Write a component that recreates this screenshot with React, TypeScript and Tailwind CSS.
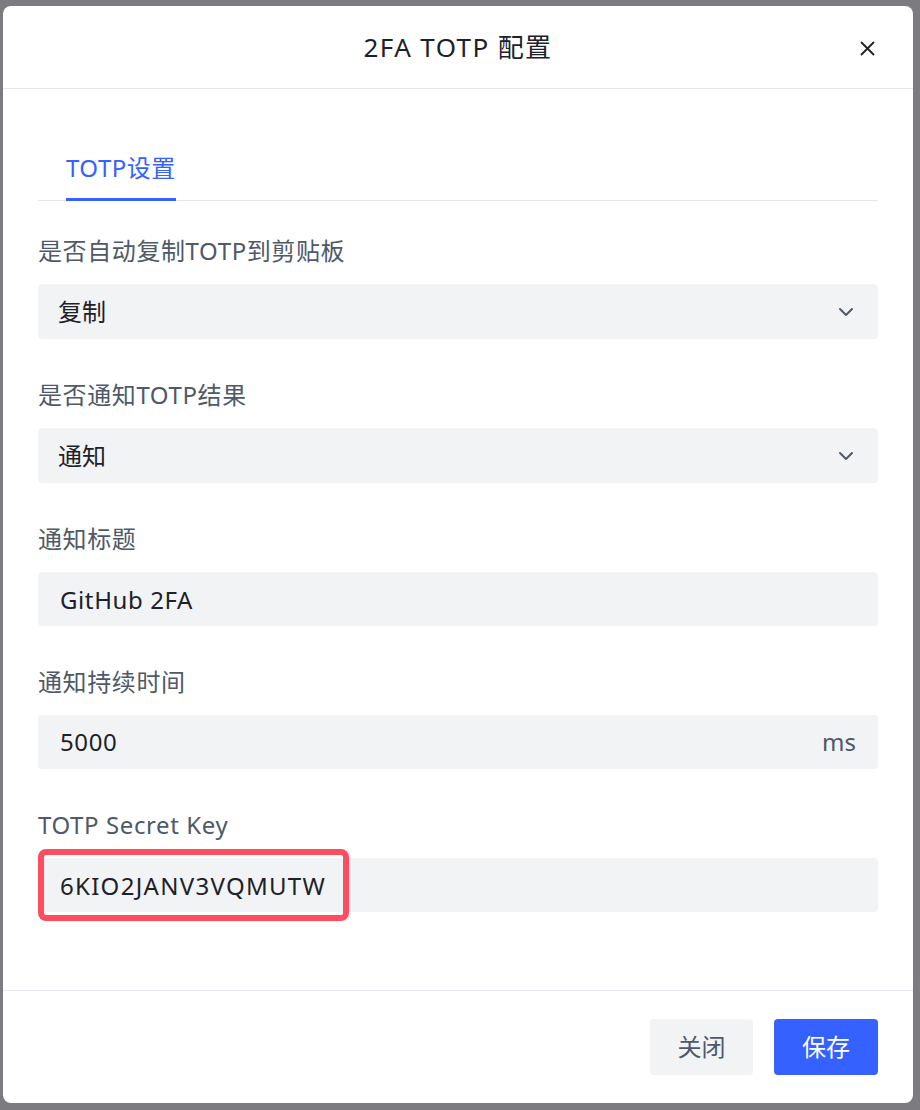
import React, { useState } from 'react';

const font = { fontFamily: '"Noto Sans", "Noto Sans CJK SC", sans-serif' };

const Chevron = () => (
    <svg width="16" height="10" viewBox="0 0 16 10" fill="none" stroke="#4e5969" strokeWidth="2" strokeLinecap="round" strokeLinejoin="round">
        <path d="M2 2 L8 8 L14 2" />
    </svg>
);

const Label: React.FC<{ text: string }> = ({ text }) => (
    <div className="h-[32px] leading-[32px] text-[24px] tracking-[0.6px] text-[#4e5969] mb-[17px]">{text}</div>
);

const SelectBox: React.FC<{ value: string }> = ({ value }) => (
    <div className="h-[55px] bg-[#f2f3f5] rounded-[4px] flex items-center justify-between pl-[20px] pr-[24px] text-[24px] text-[#1d2129]">
        <span>{value}</span>
        <Chevron />
    </div>
);

const App: React.FC = () => {
    const [title, setTitle] = useState('GitHub 2FA');
    const [duration, setDuration] = useState('5000');
    const [secret, setSecret] = useState('6KIO2JANV3VQMUTW');

    return (
        <div className="w-[920px] h-[1110px] bg-[#7b7b80] pt-[6px] pl-[3px] overflow-hidden" style={font}>
            <div className="w-[910px] h-[1097px] bg-white rounded-[8px] flex flex-col">
                {/* header */}
                <div className="relative h-[83px] shrink-0 border-b border-[#e5e6eb] flex items-center justify-center">
                    <span className="text-[26px] text-[#1d2129] tracking-[1.4px]">2FA TOTP 配置</span>
                    <button className="absolute right-[38px] top-[34px] w-[16px] h-[16px] flex items-center justify-center">
                        <svg width="15" height="15" viewBox="0 0 15 15" stroke="#1d2129" strokeWidth="1.8" strokeLinecap="round">
                            <path d="M1.5 1.5 L13.5 13.5 M13.5 1.5 L1.5 13.5" />
                        </svg>
                    </button>
                </div>

                {/* body */}
                <div className="flex-1 px-[35px] pt-[63px]">
                    <div className="flex border-b border-[#e5e6eb] pl-[28px]">
                        <div className="leading-[32px] text-[24px] tracking-[0.5px] text-[#3461ff] pb-[14px] border-b-[3px] border-[#3461ff] -mb-px">TOTP设置</div>
                    </div>

                    <div className="mt-[34px] flex flex-col gap-[40px]">
                        <div>
                            <Label text="是否自动复制TOTP到剪贴板" />
                            <SelectBox value="复制" />
                        </div>
                        <div>
                            <Label text="是否通知TOTP结果" />
                            <SelectBox value="通知" />
                        </div>
                        <div>
                            <Label text="通知标题" />
                            <input
                                value={title}
                                onChange={e => setTitle(e.target.value)}
                                className="w-full h-[54px] bg-[#f2f3f5] rounded-[4px] px-[22px] text-[24px] tracking-[0.6px] text-[#1d2129] outline-none"
                            />
                        </div>
                        <div>
                            <Label text="通知持续时间" />
                            <div className="h-[54px] bg-[#f2f3f5] rounded-[4px] flex items-center pl-[22px] pr-[22px]">
                                <input
                                    value={duration}
                                    onChange={e => setDuration(e.target.value)}
                                    className="flex-1 bg-transparent text-[24px] tracking-[0.6px] text-[#1d2129] outline-none"
                                />
                                <span className="text-[24px] text-[#4e5969]">ms</span>
                            </div>
                        </div>
                        <div>
                            <Label text="TOTP Secret Key" />
                            <div className="relative">
                                <input
                                    value={secret}
                                    onChange={e => setSecret(e.target.value)}
                                    className="w-full h-[54px] bg-[#f2f3f5] rounded-[4px] px-[22px] text-[24px] tracking-[1.3px] text-[#1d2129] outline-none"
                                />
                                {/* highlight annotation */}
                                <div className="absolute left-0 top-[-9px] w-[311px] h-[72px] border-[6px] border-[#ff4d5f] rounded-[8px] pointer-events-none" />
                            </div>
                        </div>
                    </div>
                </div>

                {/* footer */}
                <div className="h-[113px] shrink-0 border-t border-[#e5e6eb] flex items-center justify-end gap-[21px] pr-[35px] pb-[1px]">
                    <button className="w-[103px] h-[56px] bg-[#f2f3f5] rounded-[4px] text-[24px] text-[#4e5969]">关闭</button>
                    <button className="w-[104px] h-[56px] bg-[#3461ff] rounded-[4px] text-[24px] text-white">保存</button>
                </div>
            </div>
        </div>
    );
};

export default App;
